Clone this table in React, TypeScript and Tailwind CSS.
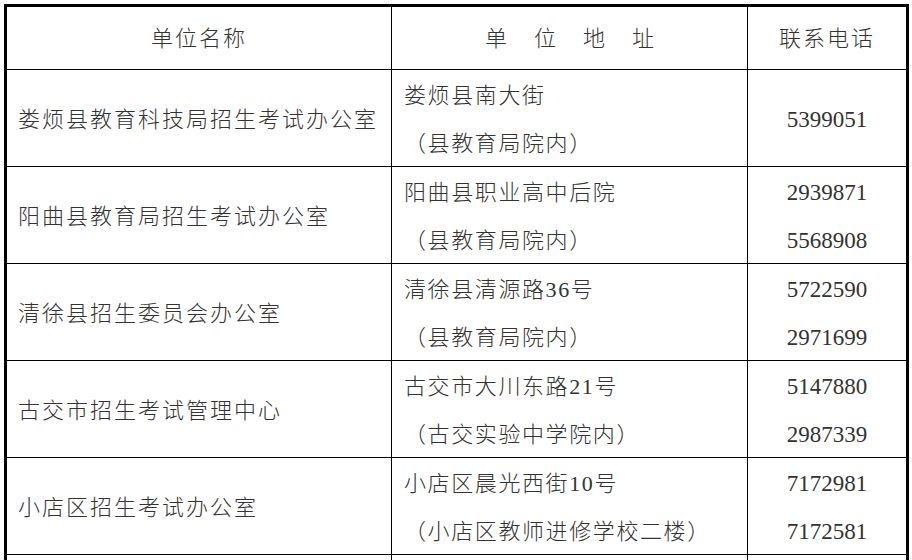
const rows = [
  {
    name: "娄烦县教育科技局招生考试办公室",
    addr: ["娄烦县南大街", "（县教育局院内）"],
    phones: ["5399051"],
  },
  {
    name: "阳曲县教育局招生考试办公室",
    addr: ["阳曲县职业高中后院", "（县教育局院内）"],
    phones: ["2939871", "5568908"],
  },
  {
    name: "清徐县招生委员会办公室",
    addr: ["清徐县清源路36号", "（县教育局院内）"],
    phones: ["5722590", "2971699"],
  },
  {
    name: "古交市招生考试管理中心",
    addr: ["古交市大川东路21号", "（古交实验中学院内）"],
    phones: ["5147880", "2987339"],
  },
  {
    name: "小店区招生考试办公室",
    addr: ["小店区晨光西街10号", "（小店区教师进修学校二楼）"],
    phones: ["7172981", "7172581"],
  },
];

const font = { fontFamily: '"Liberation Serif", "Noto Sans CJK SC", serif' };

export default function App() {
  return (
    <div className="h-[560px] w-[912px] overflow-hidden bg-white pl-[4px] pt-[4px] font-light text-[#333]" style={font}>
      <div className="w-[905px] border-x-[3px] border-t-[3px] border-black">
        {/* header */}
        <div className="flex h-[63px] border-b border-black text-[22px] tracking-[2px]">
          <div className="flex w-[385px] items-center justify-center border-r border-black">
            单位名称
          </div>
          <div className="flex w-[356px] items-center justify-center gap-[27px] border-r border-black tracking-normal">
            <span>单</span>
            <span>位</span>
            <span>地</span>
            <span>址</span>
          </div>
          <div className="flex flex-1 items-center justify-center">联系电话</div>
        </div>

        {rows.map((r) => (
          <div key={r.name} className="flex h-[97px] border-b border-black">
            <div className="flex w-[385px] items-center border-r border-black pl-[11px] pt-[2px] text-[22px] tracking-[2px]">
              {r.name}
            </div>
            <div className="flex w-[356px] flex-col justify-center border-r border-black pl-[12px] pt-[3px] text-[22px] leading-[48px] tracking-[1.6px]">
              {r.addr.map((a) => (
                <div key={a}>{a}</div>
              ))}
            </div>
            <div className="flex flex-1 flex-col items-center justify-center pt-[3px] text-[23px] leading-[48px]">
              {r.phones.map((p) => (
                <div key={p}>{p}</div>
              ))}
            </div>
          </div>
        ))}

        <div className="flex h-[20px]">
          <div className="w-[385px] border-r border-black" />
          <div className="w-[356px] border-r border-black" />
          <div className="flex-1" />
        </div>
      </div>
    </div>
  );
}
